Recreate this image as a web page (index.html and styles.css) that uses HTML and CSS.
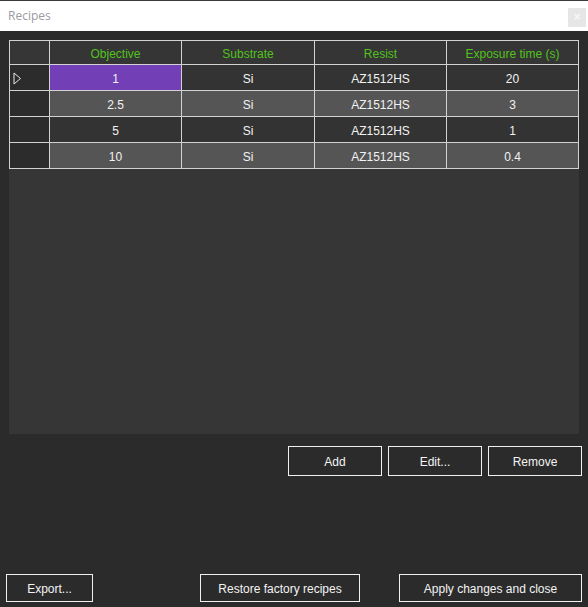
FILE: index.html
```html
<!DOCTYPE html>
<html>
<head>
<meta charset="utf-8">
<link rel="stylesheet" href="styles.css">
</head>
<body>
<div class="window">
  <div class="titlebar">
    <span class="title">Recipes</span>
    <span class="close">×</span>
  </div>
  <div class="content">
    <div class="panel">
      <div class="grid">
        <div class="cell corner"></div>
        <div class="cell head">Objective</div>
        <div class="cell head">Substrate</div>
        <div class="cell head">Resist</div>
        <div class="cell head">Exposure time (s)</div>

        <div class="cell rowhead"><svg class="arrow" width="9" height="13" viewBox="0 0 9 13"><path d="M1 1 L1 12 L7.5 6.5 Z" fill="none" stroke="#e8e8e8" stroke-width="1"/></svg></div>
        <div class="cell dark selected">1</div>
        <div class="cell dark">Si</div>
        <div class="cell dark">AZ1512HS</div>
        <div class="cell dark">20</div>

        <div class="cell rowhead"></div>
        <div class="cell light">2.5</div>
        <div class="cell light">Si</div>
        <div class="cell light">AZ1512HS</div>
        <div class="cell light">3</div>

        <div class="cell rowhead"></div>
        <div class="cell dark">5</div>
        <div class="cell dark">Si</div>
        <div class="cell dark">AZ1512HS</div>
        <div class="cell dark">1</div>

        <div class="cell rowhead"></div>
        <div class="cell light">10</div>
        <div class="cell light">Si</div>
        <div class="cell light">AZ1512HS</div>
        <div class="cell light">0.4</div>
      </div>
    </div>
    <div class="actions">
      <button class="btn btn-small">Add</button>
      <button class="btn btn-small">Edit...</button>
      <button class="btn btn-small">Remove</button>
    </div>
    <div class="spacer"></div>
    <div class="footer">
      <button class="btn btn-export">Export...</button>
      <button class="btn btn-restore">Restore factory recipes</button>
      <button class="btn btn-apply">Apply changes and close</button>
    </div>
  </div>
</div>
</body>
</html>
```

FILE: styles.css
```css
html, body {
  margin: 0;
  padding: 0;
  height: 100%;
  background: #2b2b2b;
  font-family: "Liberation Sans", Arial, sans-serif;
  font-size: 12px;
}

.window {
  display: flex;
  flex-direction: column;
  height: 607px;
  overflow: hidden;
}

.titlebar {
  height: 30px;
  border-top: 1px solid #3a3a3a;
  background: #ffffff;
  display: flex;
  align-items: flex-start;
  justify-content: space-between;
  flex: none;
}

.title {
  font-family: "Open Sans", "Noto Sans", sans-serif;
  font-size: 12px;
  color: #9c9aa2;
  margin-left: 8px;
  margin-top: 7px;
  line-height: 16px;
}

.close {
  width: 18px;
  height: 19px;
  margin-top: 7px;
  margin-right: 2px;
  background: #e6e6e6;
  color: #f6f6f6;
  font-size: 12px;
  line-height: 19px;
  text-align: center;
  font-weight: bold;
}

.content {
  flex: 1;
  display: flex;
  flex-direction: column;
  padding: 9px 6px 5px 9px;
}

.panel {
  width: 570px;
  height: 394px;
  background: #363636;
  flex: none;
}

.grid {
  display: grid;
  grid-template-columns: 39px 131px 132px 131px 131px;
  grid-template-rows: 23px 25px 25px 25px 25px;
  gap: 1px;
  padding: 1px;
  background: #d2d2d2;
  width: max-content;
}

.cell {
  display: flex;
  align-items: center;
  justify-content: center;
  color: #f2f2f2;
  line-height: 14px;
  padding-top: 2px;
  box-sizing: border-box;
}

.corner { background: #363636; }

.head {
  background: #353535;
  color: #52c21c;
}

.rowhead {
  background: #2c2c2c;
  justify-content: flex-start;
  padding-top: 0;
}

.arrow {
  margin-left: 3px;
  margin-top: 1px;
}

.dark { background: #333333; }
.light { background: #555555; }
.selected { background: #733fb6; }

.btn {
  font-family: "Liberation Sans", Arial, sans-serif;
  font-size: 12px;
  color: #f4f4f4;
  background: #2b2b2b;
  border: 1px solid #f0f0f0;
  padding: 0;
  margin: 0;
  height: 30px;
}

.actions {
  display: flex;
  justify-content: flex-end;
  gap: 6px;
  margin-top: 12px;
  flex: none;
}

.btn-small { width: 94px; padding-top: 2px; }

.spacer { flex: 1; }

.footer {
  display: flex;
  align-items: flex-end;
  flex: none;
}

.footer .btn { height: 28px; padding-top: 2px; }

.btn-export { width: 87px; margin-left: -3px; }
.btn-restore { width: 160px; margin-left: 107px; }
.btn-apply { width: 183px; margin-left: 39px; }
```
